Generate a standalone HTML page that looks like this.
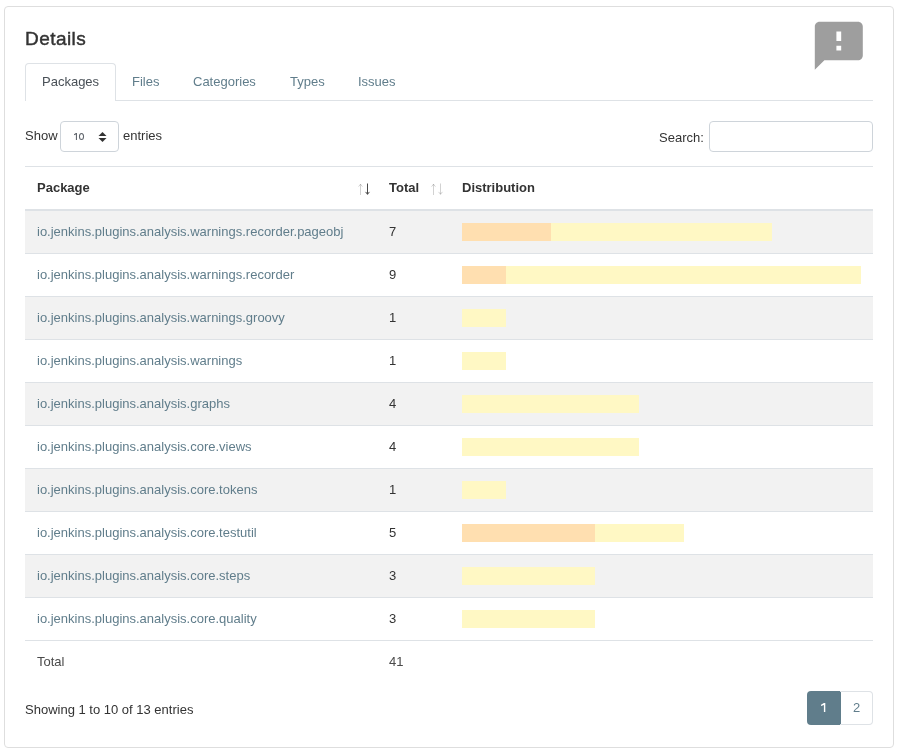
<!DOCTYPE html>
<html><head><meta charset="utf-8">
<style>
html,body{margin:0;padding:0;background:#fff;width:899px;height:755px;overflow:hidden;}
body{font-family:"Liberation Sans",sans-serif;font-size:13px;color:#333;position:relative;}
.a{position:absolute;white-space:nowrap;line-height:15px;}
.card{position:absolute;left:4px;top:6px;width:890px;height:742px;box-sizing:border-box;border:1px solid #dedede;border-radius:4px;}
.title{font-size:19px;line-height:22px;color:#333;letter-spacing:0.45px;-webkit-text-stroke:0.45px #333;}
.tab{color:#607d8b;}
.tabact{position:absolute;left:25px;top:63px;width:91px;height:38px;box-sizing:border-box;border:1px solid #dee2e6;border-bottom:none;border-radius:4px 4px 0 0;background:#fff;}
.hline{position:absolute;height:1px;background:#dee2e6;left:25px;width:848px;}
.sel{position:absolute;left:60px;top:121px;width:59px;height:31px;box-sizing:border-box;border:1px solid #ced4da;border-radius:4px;}
.inp{position:absolute;left:709px;top:121px;width:164px;height:31px;box-sizing:border-box;border:1px solid #ced4da;border-radius:4px;}
.row{position:absolute;left:25px;width:848px;height:42px;}
.row.s{background:#f2f2f2;}
.lnk{color:#607d8b;}
.th{font-weight:bold;color:#333;}
.bar{position:absolute;height:18px;}
.o{background:#ffdfb0;}
.y{background:#fff8c4;}
.arr{color:#333;font-size:13px;}
.pg{position:absolute;top:691px;height:34px;box-sizing:border-box;}
</style></head><body>
<div id="wrap" style="position:absolute;left:0;top:0;width:899px;height:755px;will-change:transform;">
<div class="card"></div>

<div class="a title" style="left:25px;top:28px;">Details</div>

<svg style="position:absolute;left:810.2px;top:16.8px;width:57.6px;height:57.6px" viewBox="0 0 24 24"><path fill="#9e9e9e" d="M20 2H4c-1.1 0-1.99.9-1.99 2L2 22l4-4h14c1.1 0 2-.9 2-2V4c0-1.1-.9-2-2-2zm-7 12h-2v-2h2v2zm0-4h-2V6h2v4z"/></svg>

<div class="hline" style="top:100px;"></div>
<div class="tabact"></div>
<div class="a" style="left:42px;top:74px;color:#495057;">Packages</div>
<div class="a tab" style="left:132px;top:74px;">Files</div>
<div class="a tab" style="left:193px;top:74px;">Categories</div>
<div class="a tab" style="left:290px;top:74px;">Types</div>
<div class="a tab" style="left:358px;top:74px;">Issues</div>

<div class="a" style="left:25px;top:128px;">Show</div>
<div class="sel"></div>
<svg style="position:absolute;left:0;top:0;width:899px;height:755px" viewBox="0 0 899 755"><path fill="#62676e" d="M75.9 133H77V140H75.9V134.6L74 135.3V134.3z"/><ellipse cx="81.5" cy="136.5" rx="2.05" ry="3.05" fill="none" stroke="#62676e" stroke-width="1.05"/></svg>
<svg style="position:absolute;left:98px;top:131px;width:9px;height:11px" viewBox="0 0 9 11"><path fill="#333" d="M4.5 1L8.5 5H0.5z M4.5 11L8.5 7H0.5z"/></svg>
<div class="a" style="left:123px;top:128px;">entries</div>

<div class="a" style="left:659px;top:130px;">Search:</div>
<div class="inp"></div>

<div class="hline" style="top:166px;"></div>
<div class="a th" style="left:37px;top:180px;">Package</div>
<div class="a th" style="left:389px;top:180px;">Total</div>
<div class="a th" style="left:462px;top:180px;">Distribution</div>
<svg style="position:absolute;left:0;top:0;width:899px;height:755px;pointer-events:none" viewBox="0 0 899 755" fill="none" stroke-width="1">
<g stroke="#333" stroke-opacity=".22"><path d="M360.5 184.2V195M358.6 186.6L360.5 184.2L362.4 186.6"/><path d="M433.5 184.2V195M431.6 186.6L433.5 184.2L435.4 186.6"/><path d="M440.5 183.5V194.3M438.6 191.9L440.5 194.3L442.4 191.9"/></g>
<g stroke="#4a4a4a"><path d="M367.5 183.5V194.3M365.6 191.9L367.5 194.3L369.4 191.9"/></g>
</svg>
<div class="hline" style="top:209px;height:2px;"></div>

<div id="rows"></div>
<!-- rows -->
<div class="row s" style="top:211px;"></div>
<div class="hline" style="top:253px;"></div>
<div class="a lnk" style="left:37px;top:224px;">io.jenkins.plugins.analysis.warnings.recorder.pageobj</div>
<div class="a" style="left:389px;top:224px;">7</div>
<div class="bar o" style="left:462px;top:223px;width:88.67px;"></div>
<div class="bar y" style="left:550.67px;top:223px;width:221.67px;"></div>
<div class="row" style="top:254px;"></div>
<div class="hline" style="top:296px;"></div>
<div class="a lnk" style="left:37px;top:267px;">io.jenkins.plugins.analysis.warnings.recorder</div>
<div class="a" style="left:389px;top:267px;">9</div>
<div class="bar o" style="left:462px;top:266px;width:44.33px;"></div>
<div class="bar y" style="left:506.33px;top:266px;width:354.67px;"></div>
<div class="row s" style="top:297px;"></div>
<div class="hline" style="top:339px;"></div>
<div class="a lnk" style="left:37px;top:310px;">io.jenkins.plugins.analysis.warnings.groovy</div>
<div class="a" style="left:389px;top:310px;">1</div>
<div class="bar y" style="left:462.00px;top:309px;width:44.33px;"></div>
<div class="row" style="top:340px;"></div>
<div class="hline" style="top:382px;"></div>
<div class="a lnk" style="left:37px;top:353px;">io.jenkins.plugins.analysis.warnings</div>
<div class="a" style="left:389px;top:353px;">1</div>
<div class="bar y" style="left:462.00px;top:352px;width:44.33px;"></div>
<div class="row s" style="top:383px;"></div>
<div class="hline" style="top:425px;"></div>
<div class="a lnk" style="left:37px;top:396px;">io.jenkins.plugins.analysis.graphs</div>
<div class="a" style="left:389px;top:396px;">4</div>
<div class="bar y" style="left:462.00px;top:395px;width:177.33px;"></div>
<div class="row" style="top:426px;"></div>
<div class="hline" style="top:468px;"></div>
<div class="a lnk" style="left:37px;top:439px;">io.jenkins.plugins.analysis.core.views</div>
<div class="a" style="left:389px;top:439px;">4</div>
<div class="bar y" style="left:462.00px;top:438px;width:177.33px;"></div>
<div class="row s" style="top:469px;"></div>
<div class="hline" style="top:511px;"></div>
<div class="a lnk" style="left:37px;top:482px;">io.jenkins.plugins.analysis.core.tokens</div>
<div class="a" style="left:389px;top:482px;">1</div>
<div class="bar y" style="left:462.00px;top:481px;width:44.33px;"></div>
<div class="row" style="top:512px;"></div>
<div class="hline" style="top:554px;"></div>
<div class="a lnk" style="left:37px;top:525px;">io.jenkins.plugins.analysis.core.testutil</div>
<div class="a" style="left:389px;top:525px;">5</div>
<div class="bar o" style="left:462px;top:524px;width:133.00px;"></div>
<div class="bar y" style="left:595.00px;top:524px;width:88.67px;"></div>
<div class="row s" style="top:555px;"></div>
<div class="hline" style="top:597px;"></div>
<div class="a lnk" style="left:37px;top:568px;">io.jenkins.plugins.analysis.core.steps</div>
<div class="a" style="left:389px;top:568px;">3</div>
<div class="bar y" style="left:462.00px;top:567px;width:133.00px;"></div>
<div class="row" style="top:598px;"></div>
<div class="hline" style="top:640px;"></div>
<div class="a lnk" style="left:37px;top:611px;">io.jenkins.plugins.analysis.core.quality</div>
<div class="a" style="left:389px;top:611px;">3</div>
<div class="bar y" style="left:462.00px;top:610px;width:133.00px;"></div>

<div class="a" style="left:37px;top:654px;color:#4a4a4a;">Total</div>
<div class="a" style="left:389px;top:654px;color:#4a4a4a;">41</div>

<div class="a" style="left:25px;top:702px;">Showing 1 to 10 of 13 entries</div>

<div class="pg" style="left:807px;width:34px;background:#607d8b;border-radius:4px 0 0 4px;"></div>
<div class="pg" style="left:840px;width:33px;border:1px solid #dee2e6;border-left:none;border-radius:0 4px 4px 0;"></div>
<svg style="position:absolute;left:0;top:0;width:899px;height:755px" viewBox="0 0 899 755"><path fill="#fff" d="M823.9 702.9H825.3V712.1H823.9V704.9L821 705.9V704.7z"/></svg>
<div class="a" style="left:853px;top:700px;color:#607d8b;">2</div>
</div>
</body></html>
